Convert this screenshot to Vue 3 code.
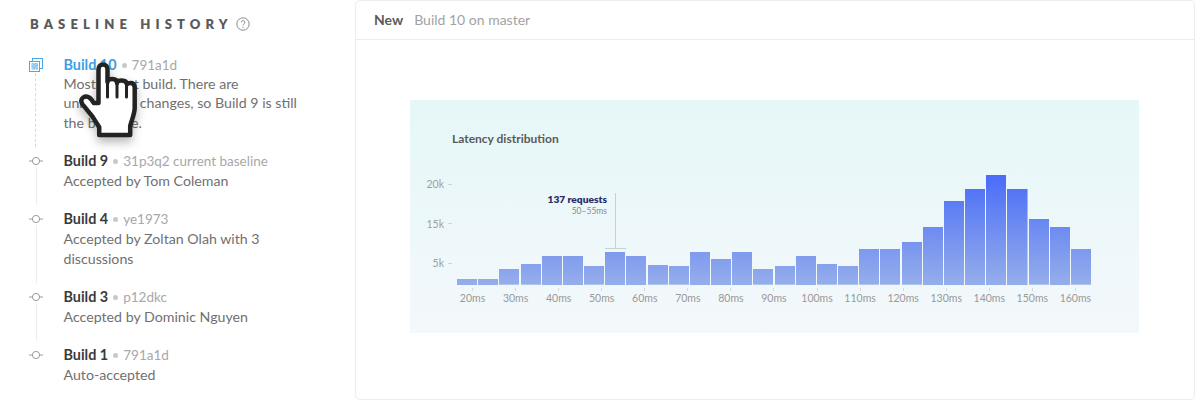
<script setup>
const builds = [
  { name: 'Build 10', meta: '791a1d', desc: 'Most recent build. There are unreviewed changes, so Build 9 is still the baseline.', active: true },
  { name: 'Build 9', meta: '31p3q2 current baseline', desc: 'Accepted by Tom Coleman' },
  { name: 'Build 4', meta: 'ye1973', desc: 'Accepted by Zoltan Olah with 3 discussions' },
  { name: 'Build 3', meta: 'p12dkc', desc: 'Accepted by Dominic Nguyen' },
  { name: 'Build 1', meta: '791a1d', desc: 'Auto-accepted', last: true },
]
const bars = [6, 6, 15.7, 20.7, 29, 29, 18.7, 33, 29, 19.7, 18.7, 33, 26.3, 33, 15.7, 18.7, 29, 20.7, 18.7, 35.7, 35.7, 42.7, 58.3, 84, 96.3, 110, 96.3, 65.7, 58.3, 35.7]
const xLabels = [20, 30, 40, 50, 60, 70, 80, 90, 100, 110, 120, 130, 140, 150, 160]
const yLabels = ['20k', '15k', '5k']
</script>

<template>
  <div class="page">
    <aside class="sidebar">
      <h2 class="heading">
        <span>BASELINE HISTORY</span>
        <svg class="help" viewBox="0 0 14 14" width="14" height="14">
          <circle cx="7" cy="7" r="6.2" fill="none" stroke="#8a8a8a" stroke-width="1" />
          <path d="M5.2 5.4a1.8 1.8 0 1 1 2.7 1.6c-.6.4-.9.7-.9 1.4" fill="none" stroke="#8a8a8a" stroke-width="1" />
          <circle cx="7" cy="10.3" r=".65" fill="#8a8a8a" />
        </svg>
      </h2>
      <ol class="timeline">
        <li v-for="b in builds" :key="b.name" class="item" :class="{ active: b.active, last: b.last }">
          <div class="rail">
            <svg v-if="b.active" class="stack" viewBox="0 0 14 14" width="14" height="14">
              <rect x="3.5" y=".5" width="10" height="10" fill="#fff" stroke="#4aa8ec" />
              <rect x=".5" y="3.5" width="10" height="10" fill="#fff" stroke="#4aa8ec" />
              <rect x="2.5" y="5" width="6.5" height="6.5" fill="#86c2ef" />
              <path d="M2.5 8l3-3M2.5 11l6-6M5.500 11.500l3.500-3.500" stroke="#d5eafa" stroke-width=".8" />
            </svg>
            <svg v-else class="node" viewBox="0 0 14 10" width="14" height="10">
              <path d="M0 5h3M11 5h3" stroke="#9a9a9a" />
              <circle cx="7" cy="5" r="3.600" fill="#fff" stroke="#9a9a9a" />
            </svg>
            <span v-if="!b.last" class="line"></span>
          </div>
          <div class="body">
            <div class="title"><strong>{{ b.name }}</strong><i class="dot"></i><span class="meta">{{ b.meta }}</span></div>
            <p class="desc">{{ b.desc }}</p>
          </div>
        </li>
      </ol>
    </aside>

    <section class="card">
      <header class="card-head"><b>New</b><span>Build 10 on master</span></header>
      <div class="card-body">
        <div class="chart">
          <h3 class="chart-title">Latency distribution</h3>
          <div class="plot">
            <div class="y-axis">
              <div v-for="y in yLabels" :key="y" class="y-label">{{ y }}<i></i></div>
            </div>
            <div class="bars">
              <div v-for="(h, i) in bars" :key="i" class="bar" :style="{ height: h + 'px' }"></div>
            </div>
            <div class="tip">
              <div class="tip-main">137 requests</div>
              <div class="tip-sub">50–55ms</div>
            </div>
            <div class="tip-line"></div>
          </div>
          <div class="x-axis">
            <div v-for="x in xLabels" :key="x" class="x-label"><i></i>{{ x }}ms</div>
          </div>
        </div>
      </div>
    </section>

    <svg class="hand" viewBox="70 55 80 95" width="80" height="95">
      <path d="M98.500 103V69a4.500 4.500 0 0 1 9 0V82q0-3 4.800-3t4.800 4q0-2.500 4.800-2.500t5 4q.5-1.500 3.800-1.500t4 4v21c0 6-3.500 13-4.500 18v9h-31v-8c-4-7-9-14-14.500-20-4-3.500-4.500-7.500-1.500-9.500 3-2 7-1 10.500 5.500z" fill="#fff" stroke="#232323" stroke-width="4.500" stroke-linejoin="round" />
      <path d="M107.500 82v15M117 84v13M126.500 86v11" fill="none" stroke="#232323" stroke-width="3" stroke-linecap="round" />
    </svg>
  </div>
</template>

<style scoped>
.page {
  position: relative;
  display: flex;
  width: 1200px;
  height: 400px;
  overflow: hidden;
  background: #fff;
  font-family: "Lato", "Noto Sans", sans-serif;
  color: #707070;
}
.sidebar {
  width: 355px;
  flex: none;
  padding: 16px 0 0 30px;
  box-sizing: border-box;
}
.heading {
  display: flex;
  align-items: center;
  gap: 8px;
  height: 16px;
  margin: 0 0 23px;
  font-size: 13px;
  font-weight: 800;
  letter-spacing: 5.150px;
  color: #5a5a5a;
}
.help { margin-left: -5px; }
.timeline { list-style: none; margin: 0 0 0 -1px; padding: 0; }
.item { display: flex; }
.rail {
  width: 14px;
  flex: none;
  display: flex;
  flex-direction: column;
  align-items: center;
  margin-right: 20.500px;
  padding-top: 5px;
}
.active .rail { padding-top: 3px; }
.line {
  flex: 1;
  width: 1px;
  margin: 1px 0 4px;
  background: #ececec;
}
.active .line {
  background: none;
  border-left: 1px dashed #d8d8d8;
}
.body {
  width: 245px;
  padding-bottom: 18px;
  font-size: 14px;
  line-height: 20px;
}
.active .body { padding-bottom: 19px; }
.active .desc { line-height: 19.400px; margin-top: -1px; }
.title { display: flex; align-items: center; }
.title strong { color: #3a3a3a; font-weight: 700; font-size: 14.400px; }
.active .title strong { color: #3a9fe5; }
.dot {
  width: 5px;
  height: 5px;
  border-radius: 50%;
  background: #c8c8c8;
  margin: 0 5px;
}
.meta { color: #a8a8a8; font-size: 13.500px; }
.desc { margin: 0; font-size: 14.200px; color: #707070; }

.card {
  flex: none;
  width: 840px;
  height: 400px;
  box-sizing: border-box;
  display: flex;
  flex-direction: column;
  border: 1px solid #ececec;
  border-radius: 5px;
}
.card-head {
  height: 39px;
  flex: none;
  box-sizing: border-box;
  display: flex;
  align-items: center;
  gap: 11px;
  padding: 0 18px 2px;
  border-bottom: 1px solid #ececec;
  font-size: 14px;
  color: #a2a2a2;
}
.card-head b { color: #5a5a5a; font-weight: 700; }
.card-body {
  flex: 1;
  display: flex;
  padding: 60px 55px 0 54px;
}
.chart {
  width: 730px;
  height: 233px;
  box-sizing: border-box;
  padding-top: 31px;
  background: linear-gradient(#e6f7f8, #f3f8fb);
}
.chart-title {
  margin: 0 0 29px 42px;
  height: 15px;
  font-size: 12px;
  line-height: 15px;
  font-weight: 700;
  color: #5a5a5a;
}
.plot { position: relative; display: flex; height: 110px; }
.y-axis {
  width: 47px;
  flex: none;
  display: flex;
  flex-direction: column;
  gap: 27.500px;
  padding-top: 3px;
}
.y-label {
  display: flex;
  align-items: center;
  justify-content: flex-end;
  gap: 4px;
  height: 12px;
  padding-right: 5px;
  font-size: 10.500px;
  color: #a0a0a0;
}
.y-label i { width: 4px; height: 1px; background: #cfd6d8; }
.bars {
  width: 634px;
  display: flex;
  align-items: flex-end;
  gap: 1.130px;
}
.bar {
  flex: 1;
  background: linear-gradient(#4a6cf8, #95aeea) bottom / 100% 110px no-repeat;
}
.tip {
  position: absolute;
  right: 532px;
  top: 18px;
  text-align: right;
}
.tip-main { font-size: 10.200px; line-height: 13px; font-weight: 800; color: #2b2d6b; }
.tip-sub { font-size: 8.500px; line-height: 11px; color: #8c8c8c; }
.tip-line {
  position: absolute;
  left: 195px;
  top: 18px;
  width: 21px;
  height: 56px;
  box-sizing: border-box;
  border-bottom: 1px solid #c9d0d3;
  background: linear-gradient(#c9d0d3, #c9d0d3) center / 1px 100% no-repeat;
}
.x-axis {
  display: grid;
  grid-template-columns: repeat(15, 43.070px);
  margin-left: 41px;
}
.x-label {
  display: flex;
  flex-direction: column;
  align-items: center;
  font-size: 10.500px;
  line-height: 13px;
  color: #999;
}
.x-label i {
  width: 1px;
  height: 3px;
  margin: 3px 0 1px;
  background: #d3dadc;
}
.hand {
  position: absolute;
  left: 70px;
  top: 55px;
  filter: drop-shadow(0 5px 5px rgba(0, 0, 0, .28));
}
</style>
